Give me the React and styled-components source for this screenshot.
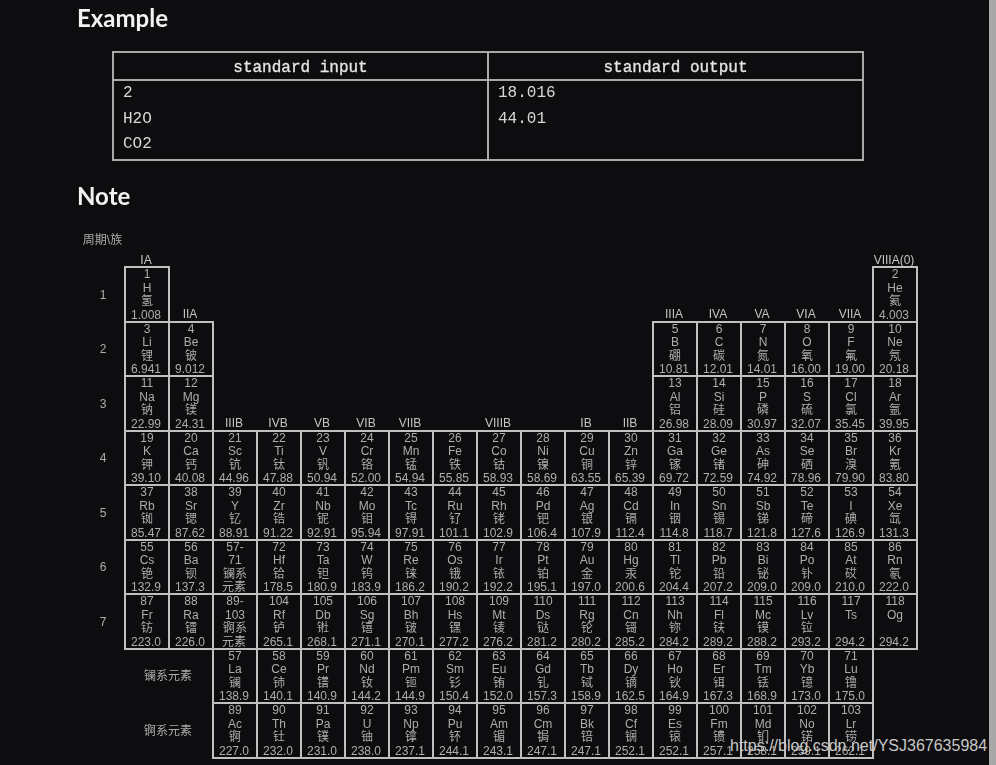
import styled, { createGlobalStyle } from "styled-components";

const GlobalStyle = createGlobalStyle`
  html, body {
    margin: 0;
    padding: 0;
    background: #0d0d0f;
  }
`;

const groups = [
  ["IA", 1, 0],
  ["IIA", 2, 1],
  ["IIIB", 3, 3],
  ["IVB", 4, 3],
  ["VB", 5, 3],
  ["VIB", 6, 3],
  ["VIIB", 7, 3],
  ["VIIIB", 9, 3],
  ["IB", 11, 3],
  ["IIB", 12, 3],
  ["IIIA", 13, 1],
  ["IVA", 14, 1],
  ["VA", 15, 1],
  ["VIA", 16, 1],
  ["VIIA", 17, 1],
  ["VIIIA(0)", 18, 0],
];

// [row, first column, "number symbol name mass" separated by commas]
const blocks = [
  [1, 1, "1 H 氢 1.008"],
  [1, 18, "2 He 氦 4.003"],
  [2, 1, "3 Li 锂 6.941,4 Be 铍 9.012"],
  [2, 13, "5 B 硼 10.81,6 C 碳 12.01,7 N 氮 14.01,8 O 氧 16.00,9 F 氟 19.00,10 Ne 氖 20.18"],
  [3, 1, "11 Na 钠 22.99,12 Mg 镁 24.31"],
  [3, 13, "13 Al 铝 26.98,14 Si 硅 28.09,15 P 磷 30.97,16 S 硫 32.07,17 Cl 氯 35.45,18 Ar 氩 39.95"],
  [4, 1, "19 K 钾 39.10,20 Ca 钙 40.08,21 Sc 钪 44.96,22 Ti 钛 47.88,23 V 钒 50.94,24 Cr 铬 52.00,25 Mn 锰 54.94,26 Fe 铁 55.85,27 Co 钴 58.93,28 Ni 镍 58.69,29 Cu 铜 63.55,30 Zn 锌 65.39,31 Ga 镓 69.72,32 Ge 锗 72.59,33 As 砷 74.92,34 Se 硒 78.96,35 Br 溴 79.90,36 Kr 氪 83.80"],
  [5, 1, "37 Rb 铷 85.47,38 Sr 锶 87.62,39 Y 钇 88.91,40 Zr 锆 91.22,41 Nb 铌 92.91,42 Mo 钼 95.94,43 Tc 锝 97.91,44 Ru 钌 101.1,45 Rh 铑 102.9,46 Pd 钯 106.4,47 Ag 银 107.9,48 Cd 镉 112.4,49 In 铟 114.8,50 Sn 锡 118.7,51 Sb 锑 121.8,52 Te 碲 127.6,53 I 碘 126.9,54 Xe 氙 131.3"],
  [6, 1, "55 Cs 铯 132.9,56 Ba 钡 137.3,57- 71 镧系 元素,72 Hf 铪 178.5,73 Ta 钽 180.9,74 W 钨 183.9,75 Re 铼 186.2,76 Os 锇 190.2,77 Ir 铱 192.2,78 Pt 铂 195.1,79 Au 金 197.0,80 Hg 汞 200.6,81 Tl 铊 204.4,82 Pb 铅 207.2,83 Bi 铋 209.0,84 Po 钋 209.0,85 At 砹 210.0,86 Rn 氡 222.0"],
  [7, 1, "87 Fr 钫 223.0,88 Ra 镭 226.0,89- 103 锕系 元素,104 Rf 𬬻 265.1,105 Db 𬭊 268.1,106 Sg 𬭳 271.1,107 Bh 𬭛 270.1,108 Hs 𬭶 277.2,109 Mt 鿏 276.2,110 Ds 𫟼 281.2,111 Rg 𬬭 280.2,112 Cn 鿔 285.2,113 Nh 鿭 284.2,114 Fl 𫓧 289.2,115 Mc 镆 288.2,116 Lv 𫟷 293.2,117 Ts \u00a0 294.2,118 Og \u00a0 294.2"],
  [8, 3, "57 La 镧 138.9,58 Ce 铈 140.1,59 Pr 镨 140.9,60 Nd 钕 144.2,61 Pm 钷 144.9,62 Sm 钐 150.4,63 Eu 铕 152.0,64 Gd 钆 157.3,65 Tb 铽 158.9,66 Dy 镝 162.5,67 Ho 钬 164.9,68 Er 铒 167.3,69 Tm 铥 168.9,70 Yb 镱 173.0,71 Lu 镥 175.0"],
  [9, 3, "89 Ac 锕 227.0,90 Th 钍 232.0,91 Pa 镤 231.0,92 U 铀 238.0,93 Np 镎 237.1,94 Pu 钚 244.1,95 Am 镅 243.1,96 Cm 锔 247.1,97 Bk 锫 247.1,98 Cf 锎 252.1,99 Es 锿 252.1,100 Fm 镄 257.1,101 Md 钔 258.1,102 No 锘 259.1,103 Lr 铹 262.1"],
];

const elements = blocks.flatMap(([row, first, text]) =>
  text.split(",").map((item, i) => {
    const [num, symbol, name, mass] = item.split(" ");
    return { row, col: first + i, num, symbol, name, mass };
  })
);

function App() {
  return (
    <>
      <GlobalStyle />
      <Page>
        <Main>
          <Heading>Example</Heading>
          <SampleTable>
            <thead>
              <tr>
                <SampleHead>standard input</SampleHead>
                <SampleHead>standard output</SampleHead>
              </tr>
            </thead>
            <tbody>
              <tr>
                <SampleCell>
                  2
                  <br />
                  H2O
                  <br />
                  CO2
                </SampleCell>
                <SampleCell>
                  18.016
                  <br />
                  44.01
                </SampleCell>
              </tr>
            </tbody>
          </SampleTable>
          <NoteHeading>Note</NoteHeading>
          <Periodic>
            <Corner>周期\族</Corner>
            {[1, 2, 3, 4, 5, 6, 7].map((n) => (
              <PeriodNo key={n} $row={n}>
                {n}
              </PeriodNo>
            ))}
            {groups.map(([label, col, row]) => (
              <GroupLabel key={label} $col={col} $row={row}>
                {label}
              </GroupLabel>
            ))}
            {elements.map((el) => (
              <Cell key={el.row + "-" + el.col} $col={el.col} $row={el.row}>
                <span>{el.num}</span>
                <span>{el.symbol}</span>
                <span>{el.name}</span>
                <Mass>{el.mass}</Mass>
              </Cell>
            ))}
            <SeriesLabel $row={8}>镧系元素</SeriesLabel>
            <SeriesLabel $row={9}>锕系元素</SeriesLabel>
          </Periodic>
        </Main>
        <Edge />
        <Watermark>https://blog.csdn.net/YSJ367635984</Watermark>
      </Page>
    </>
  );
}

const Page = styled.div`
  position: relative;
  display: flex;
  height: 765px;
  overflow: hidden;
`;

const Main = styled.div`
  flex: 1;
  padding-left: 77px;
  background: #0d0d0f;
  filter: blur(0.35px);
`;

const Edge = styled.div`
  width: 7px;
  background: #a8a8a8;
`;

const Heading = styled.h2`
  margin: 0;
  padding-top: 3px;
  height: 51px;
  box-sizing: border-box;
  font: 700 24px/30px Lato, "Noto Sans", sans-serif;
  color: #f2f2f2;
`;

const NoteHeading = styled(Heading)`
  padding-top: 20px;
  height: 51px;
`;

const SampleTable = styled.table`
  margin-left: 35px;
  width: 752px;
  border-collapse: collapse;
  table-layout: fixed;
  font: 16px/25.5px "Liberation Mono", "DejaVu Sans Mono", monospace;
  color: #d8d8d8;
`;

const SampleHead = styled.th`
  height: 22px;
  padding: 4px 0 0;
  border: 2px solid #a8a8a8;
  font-weight: 400;
  line-height: 22px;
  color: #e6e6e6;
  -webkit-text-stroke: 0.3px #e6e6e6;
`;

const SampleCell = styled.td`
  padding: 0 9px 1px;
  border: 2px solid #a8a8a8;
  vertical-align: top;
`;

const Periodic = styled.div`
  margin-left: 3px;
  display: grid;
  grid-template-columns: 44px repeat(18, 44px);
  grid-template-rows: repeat(10, 54.5px);
  font: 12px/13.5px "Liberation Sans", "Noto Sans CJK SC", sans-serif;
  color: #adadad;
`;

const Corner = styled.div`
  grid-column: 1;
  grid-row: 1;
  align-self: center;
  text-align: center;
  padding: 4px 0 0 1px;
`;

const PeriodNo = styled(Corner)`
  grid-row: ${(p) => p.$row + 1};
  padding-left: 2px;
`;

const GroupLabel = styled.div`
  grid-column: ${(p) => p.$col + 1};
  grid-row: ${(p) => p.$row + 1};
  align-self: end;
  text-align: center;
  white-space: nowrap;
  margin-bottom: -1px;
  color: #c4c4c4;
`;

const SeriesLabel = styled.div`
  grid-column: 2 / 4;
  grid-row: ${(p) => p.$row + 1};
  align-self: center;
  text-align: center;
  padding-top: 4px;
`;

const Cell = styled.div`
  grid-column: ${(p) => p.$col + 1};
  grid-row: ${(p) => p.$row + 1};
  margin: 0 -2px -2px 0;
  border: 2px solid #c0c0c0;
  box-sizing: border-box;
  display: flex;
  flex-direction: column;
  align-items: center;
  overflow: hidden;
  white-space: nowrap;
`;

const Mass = styled.span`
  margin-right: 2px;
`;

const Watermark = styled.div`
  position: absolute;
  left: 730px;
  top: 737px;
  font: 16px/18px "Liberation Sans", sans-serif;
  color: #c8c8c8;
  white-space: nowrap;
`;

export default App;
